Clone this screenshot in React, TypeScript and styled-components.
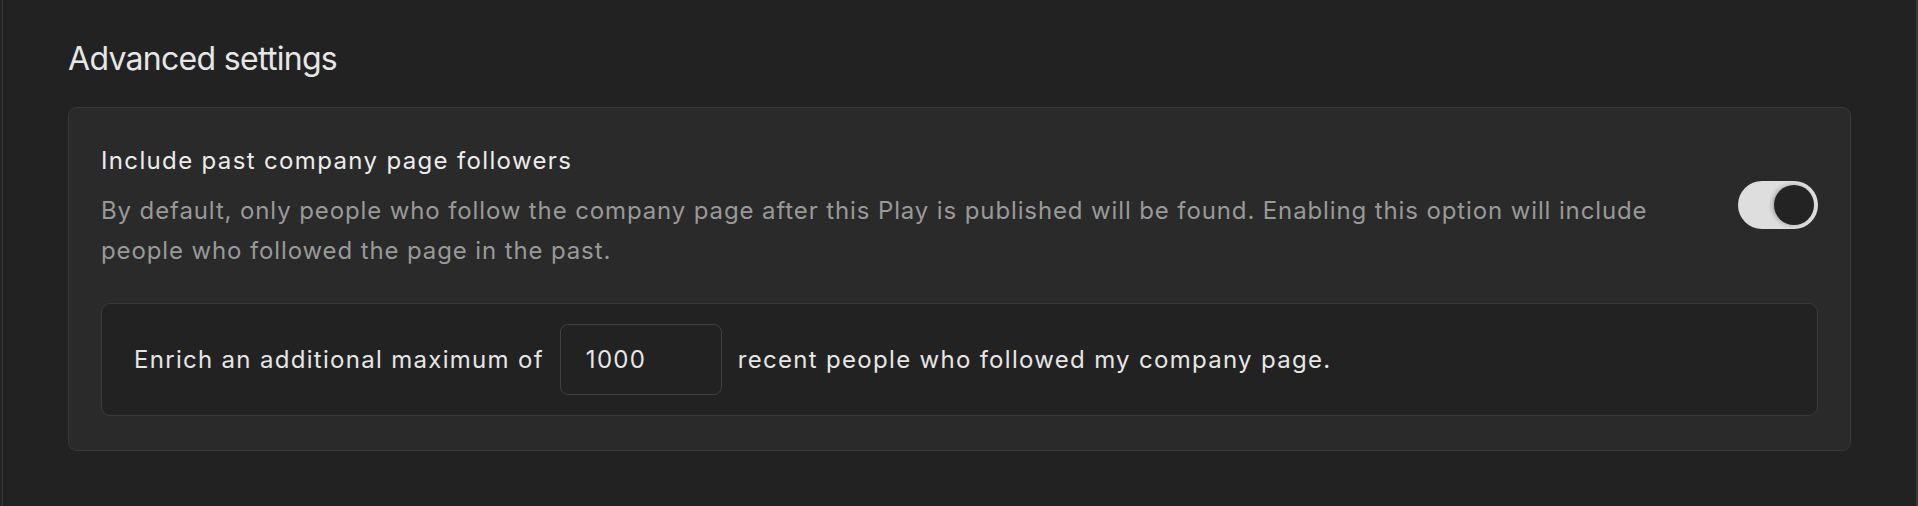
import styled, { createGlobalStyle } from 'styled-components'

const GlobalStyle = createGlobalStyle`
  html, body {
    margin: 0;
    padding: 0;
    background-color: #222222;
  }
  body {
    font-family: Inter, "Liberation Sans", sans-serif;
    -webkit-font-smoothing: antialiased;
  }
`

const Page = styled.div`
  display: flex;
  width: 1918px;
  height: 506px;
  background-color: #222222;
  overflow: hidden;
`

const EdgeStrip = styled.div`
  width: 2px;
  flex-shrink: 0;
  background-color: #252525;
`

const Main = styled.main`
  flex: 1;
  border-left: 1px solid #363636;
  border-right: 2px solid #3a3a3a;
  padding: 39px 65px 0 65px;
`

const Heading = styled.h2`
  margin: 0 0 28px 0;
  font-size: 32px;
  line-height: 40px;
  font-weight: 400;
  color: #e6e6e6;
  letter-spacing: -0.7px;
`

const Card = styled.section`
  display: flex;
  flex-direction: column;
  gap: 32px;
  background-color: #2a2a2a;
  border: 1px solid #3a3a3a;
  border-radius: 9px;
  padding: 37px 32px 34px 32px;
`

const OptionRow = styled.div`
  display: flex;
  align-items: center;
  gap: 72px;
`

const OptionText = styled.div`
  flex: 1;
  display: flex;
  flex-direction: column;
  gap: 14px;
`

const OptionTitle = styled.div`
  font-size: 24px;
  line-height: 32px;
  font-weight: 400;
  letter-spacing: 1.35px;
  color: #ececec;
`

const OptionDescription = styled.p`
  margin: 0;
  font-size: 24px;
  line-height: 40px;
  letter-spacing: 0.88px;
  color: #999999;
`

const Track = styled.button<{ on?: boolean }>`
  display: flex;
  align-items: center;
  justify-content: ${props => props.on ? 'flex-end' : 'flex-start'};
  flex-shrink: 0;
  width: 80px;
  height: 48px;
  margin-bottom: 6px;
  padding: 4px;
  border: none;
  border-radius: 24px;
  background-color: ${props => props.on ? '#dedede' : '#444444'};
  cursor: pointer;
`

const Knob = styled.span`
  width: 40px;
  height: 40px;
  border-radius: 50%;
  background-color: #232323;
  box-shadow: -2px 0 4px rgba(0, 0, 0, 0.25);
`

const LimitBox = styled.div`
  display: flex;
  align-items: center;
  gap: 16px;
  background-color: #222222;
  border: 1px solid #3a3a3a;
  border-radius: 9px;
  padding: 20px 32px;
  font-size: 24px;
  line-height: 32px;
  letter-spacing: 1.3px;
  color: #e6e6e6;
`

const NumberInput = styled.input`
  box-sizing: border-box;
  width: 162px;
  height: 71px;
  padding: 0 0 0 25px;
  border: 1px solid #404040;
  border-radius: 8px;
  background-color: #222222;
  font-family: Inter, "Liberation Sans", sans-serif;
  font-size: 24px;
  letter-spacing: 1.3px;
  color: #e6e6e6;
  outline: none;
`

function App() {
  return (
    <>
      <GlobalStyle />
      <Page>
        <EdgeStrip />
        <Main>
          <Heading>Advanced settings</Heading>
          <Card>
            <OptionRow>
              <OptionText>
                <OptionTitle>Include past company page followers</OptionTitle>
                <OptionDescription>
                  By default, only people who follow the company page after this Play is published will be found. Enabling this option will include people who followed the page in the past.
                </OptionDescription>
              </OptionText>
              <Track on aria-label="Include past company page followers">
                <Knob />
              </Track>
            </OptionRow>
            <LimitBox>
              <span>Enrich an additional maximum of</span>
              <NumberInput defaultValue="1000" />
              <span>recent people who followed my company page.</span>
            </LimitBox>
          </Card>
        </Main>
      </Page>
    </>
  )
}

export default App
